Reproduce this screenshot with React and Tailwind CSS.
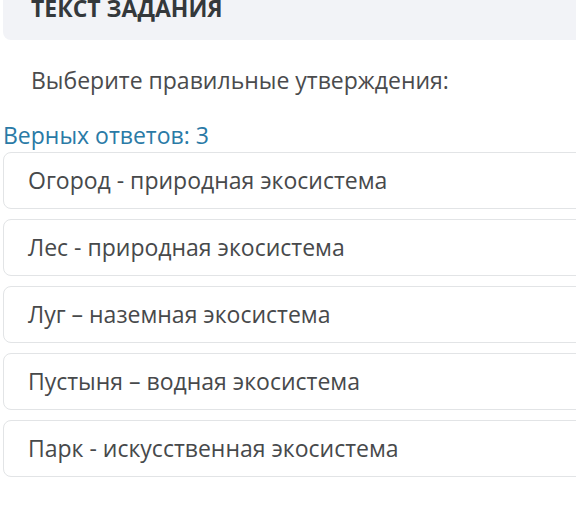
const options = [
  'Огород - природная экосистема',
  'Лес - природная экосистема',
  'Луг – наземная экосистема',
  'Пустыня – водная экосистема',
  'Парк - искусственная экосистема',
]

export default function App() {
  return (
    <div className="w-[576px] h-[505px] overflow-hidden bg-white font-['Open_Sans',sans-serif]">
      <div className="ml-[3px] -mt-[6px] rounded-bl-lg bg-[#f2f3f7] pl-[28px] pb-[18px]">
        <div className="text-[23px] leading-[28px] font-bold text-[#34383b]">ТЕКСТ ЗАДАНИЯ</div>
      </div>

      <p className="mt-[24px] pl-[31px] text-[23px] leading-[32px] text-[#4a4b4d]">
        Выберите правильные утверждения:
      </p>

      <div className="mt-[23px] pl-[3px] text-[23px] leading-[32px] text-[#2a7aa6]">Верных ответов: 3</div>

      <div className="mt-[1px] flex flex-col gap-[10px] pl-[3px]">
        {options.map((text) => (
          <div
            key={text}
            className="h-[57px] -mr-4 flex items-center rounded-lg border border-[#e2e4e6] bg-white pl-[24px] text-[23px] text-[#47494b]"
          >
            {text}
          </div>
        ))}
      </div>
    </div>
  )
}
